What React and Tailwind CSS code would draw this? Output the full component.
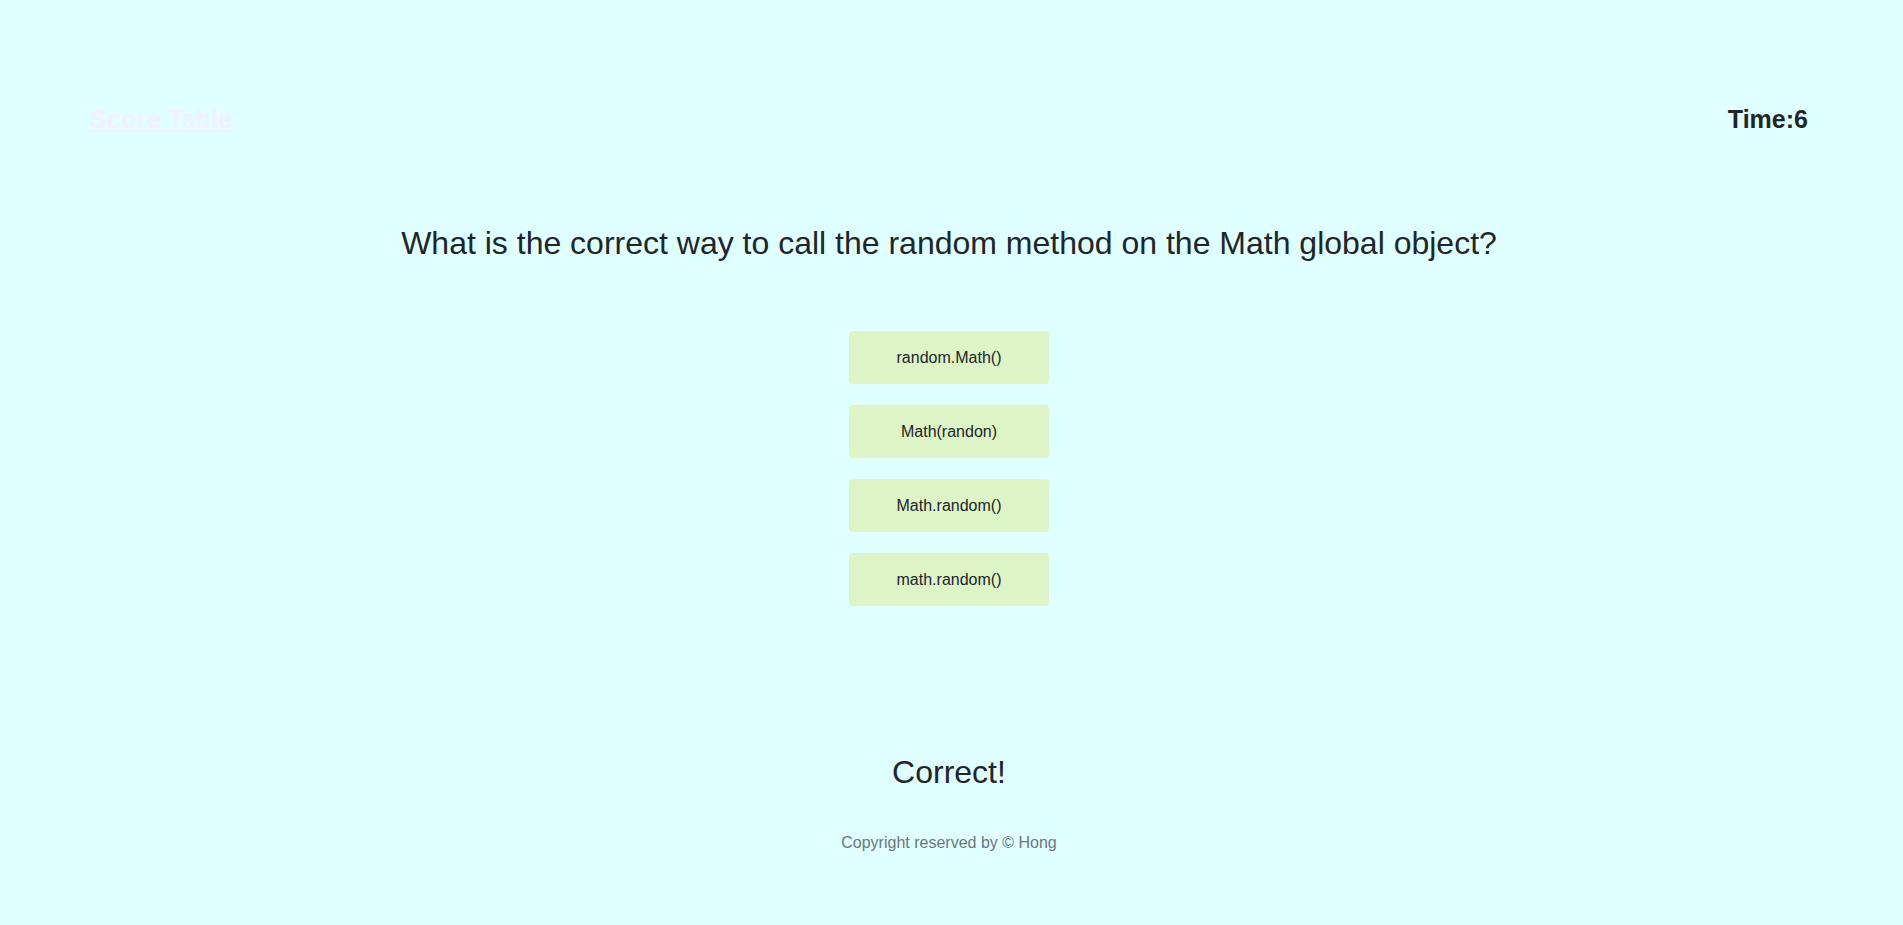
const answers = ["random.Math()", "Math(randon)", "Math.random()", "math.random()"];

export default function App() {
  return (
    <div
      className="min-h-screen bg-[#e0ffff] pr-[5px] text-[#212529]"
      style={{ fontFamily: '"Liberation Sans", Arial, sans-serif' }}
    >
      <header className="flex items-center justify-between px-[90px] pt-[104px]">
        <a href="#" className="text-[25.5px] leading-[30px] font-bold text-[#f3f0ff] underline">
          Score Table
        </a>
        <div className="text-[25px] leading-[30px] font-bold">Time:6</div>
      </header>

      <main className="flex flex-col items-center">
        <h2 className="mt-[89px] text-[32px] leading-[40px]">
          What is the correct way to call the random method on the Math global object?
        </h2>

        <div className="mt-[68px] flex flex-col gap-[21px]">
          {answers.map((a) => (
            <button
              key={a}
              className="flex h-[53px] w-[200px] items-center justify-center rounded-[4px] bg-[#ddf4c6] text-[16px] text-[#212529]"
            >
              {a}
            </button>
          ))}
        </div>

        <p className="mt-[146px] text-[32px] leading-[40px]">Correct!</p>

        <footer className="mt-[39px] pb-[70px] text-[16px] leading-[24px] text-[#6c757d]">
          Copyright reserved by © Hong
        </footer>
      </main>
    </div>
  );
}
